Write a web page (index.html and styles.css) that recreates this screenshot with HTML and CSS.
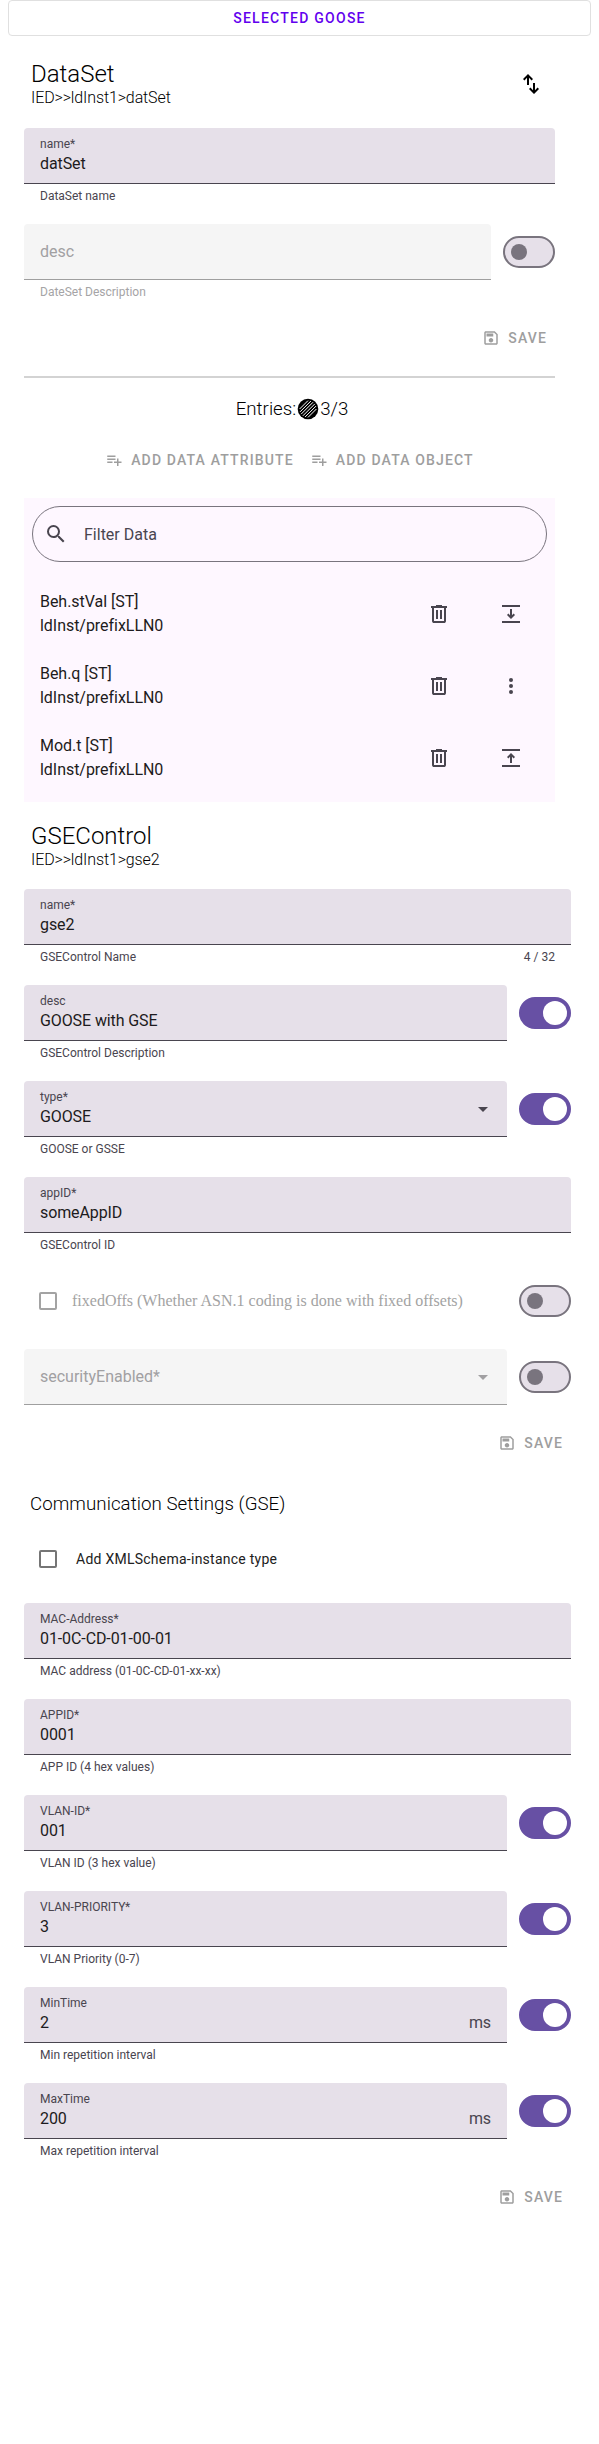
FILE: index.html
```html
<!DOCTYPE html>
<html lang="en">
<head>
<meta charset="utf-8">
<title>GOOSE editor</title>
<link rel="stylesheet" href="styles.css">
</head>
<body>
<svg class="defs" width="0" height="0" aria-hidden="true">
  <symbol id="save" viewBox="0 0 24 24"><path d="M17 3H5c-1.11 0-2 .9-2 2v14c0 1.1.89 2 2 2h14c1.1 0 2-.9 2-2V7l-4-4zm2 16H5V5h11.17L19 7.83V19zm-7-7c-1.66 0-3 1.34-3 3s1.34 3 3 3 3-1.34 3-3-1.34-3-3-3zM6 6h9v4H6z"/></symbol>
  <symbol id="playlist-add" viewBox="0 0 24 24"><path d="M14 10H3v2h11v-2zm0-4H3v2h11V6zm4 8v-4h-2v4h-4v2h4v4h2v-4h4v-2h-4zM3 16h7v-2H3v2z"/></symbol>
  <symbol id="delete" viewBox="0 -960 960 960"><path d="M280-120q-33 0-56.500-23.500T200-200v-520h-40v-80h200v-40h240v40h200v80h-40v520q0 33-23.500 56.500T680-120H280Zm400-600H280v520h400v-520ZM360-280h80v-360h-80v360Zm160 0h80v-360h-80v360Z"/></symbol>
  <symbol id="drop-down" viewBox="0 0 24 24"><path d="M7 10l5 5 5-5z"/></symbol>
</svg>

<button class="select-button">Selected GOOSE</button>

<main>
  <section class="dataset">
    <header class="heading">
      <div>
        <h2>DataSet</h2>
        <p>IED&gt;&gt;ldInst1&gt;datSet</p>
      </div>
      <span class="icon-button"><svg class="icon" viewBox="0 -960 960 960"><path d="M320-440v-287L217-624l-57-56 200-200 200 200-57 56-103-103v287h-80ZM600-80 400-280l57-56 103 103v-287h80v287l103-103 57 56L600-80Z"/></svg></span>
    </header>

    <div class="row">
      <div class="field">
        <div class="box"><span class="label">name*</span><span class="value">datSet</span></div>
        <div class="support"><span>DataSet name</span></div>
      </div>
    </div>
    <div class="row">
      <div class="field disabled">
        <div class="box"><span class="placeholder">desc</span></div>
        <div class="support"><span>DateSet Description</span></div>
      </div>
      <span class="switch"></span>
    </div>
    <div class="actions"><button class="text-button" disabled><svg><use href="#save"/></svg>Save</button></div>

    <hr>
    <h3 class="entries"><span>Entries:</span><svg class="icon" viewBox="0 0 24 24"><circle cx="12" cy="12" r="10.300"/><path class="hatch" d="M3.600 12L12 3.600M4 14.900L14.900 4M5.200 17.100L17.100 5.200M6.900 18.800L18.800 6.900M9.100 20L20 9.100M12 20.400L20.400 12"/></svg><span>3/3</span></h3>
    <div class="add-actions">
      <button class="text-button" disabled><svg><use href="#playlist-add"/></svg>Add data attribute</button>
      <button class="text-button" disabled><svg><use href="#playlist-add"/></svg>Add data object</button>
    </div>

    <div class="list">
      <div class="search">
        <svg class="icon" viewBox="0 0 24 24"><path d="M15.500 14h-.79l-.28-.27A6.471 6.471 0 0 0 16 9.500 6.500 6.500 0 1 0 9.500 16c1.610 0 3.090-.59 4.230-1.570l.27.28v.79l5 4.990L20.490 19l-4.990-5zm-6 0C7.010 14 5 11.990 5 9.500S7.010 5 9.500 5 14 7.010 14 9.500 11.990 14 9.500 14z"/></svg>
        <span>Filter Data</span>
      </div>
      <ul>
        <li>
          <div class="item-text">Beh.stVal [ST]<br>ldInst/prefixLLN0</div>
          <svg class="icon"><use href="#delete"/></svg>
          <svg class="icon" viewBox="0 0 24 24"><path d="M3 3h18v2H3zM3 19h18v2H3zM11 7h2v6.200l1.600-1.600L16 13l-4 4-4-4 1.400-1.400L11 13.200z"/></svg>
        </li>
        <li>
          <div class="item-text">Beh.q [ST]<br>ldInst/prefixLLN0</div>
          <svg class="icon"><use href="#delete"/></svg>
          <svg class="icon" viewBox="0 0 24 24"><circle cx="12" cy="6" r="2"/><circle cx="12" cy="12" r="2"/><circle cx="12" cy="18" r="2"/></svg>
        </li>
        <li>
          <div class="item-text">Mod.t [ST]<br>ldInst/prefixLLN0</div>
          <svg class="icon"><use href="#delete"/></svg>
          <svg class="icon" viewBox="0 0 24 24"><path d="M3 3h18v2H3zM3 19h18v2H3zM11 17h2v-6.200l1.600 1.600L16 11l-4-4-4 4 1.400 1.400L11 10.800z"/></svg>
        </li>
      </ul>
    </div>
  </section>

  <section class="control">
    <header class="heading">
      <div>
        <h2>GSEControl</h2>
        <p>IED&gt;&gt;ldInst1&gt;gse2</p>
      </div>
    </header>
    <div class="row">
      <div class="field">
        <div class="box"><span class="label">name*</span><span class="value">gse2</span></div>
        <div class="support"><span>GSEControl Name</span><span>4 / 32</span></div>
      </div>
    </div>
    <div class="row">
      <div class="field">
        <div class="box"><span class="label">desc</span><span class="value">GOOSE with GSE</span></div>
        <div class="support"><span>GSEControl Description</span></div>
      </div>
      <span class="switch on"></span>
    </div>
    <div class="row">
      <div class="field">
        <div class="box select"><div><span class="label">type*</span><span class="value">GOOSE</span></div><svg class="icon"><use href="#drop-down"/></svg></div>
        <div class="support"><span>GOOSE or GSSE</span></div>
      </div>
      <span class="switch on"></span>
    </div>
    <div class="row">
      <div class="field">
        <div class="box"><span class="label">appID*</span><span class="value">someAppID</span></div>
        <div class="support"><span>GSEControl ID</span></div>
      </div>
    </div>
    <div class="row check-row">
      <div class="check disabled"><span class="checkbox"></span><span class="serif">fixedOffs (Whether ASN.1 coding is done with fixed offsets)</span></div>
      <span class="switch"></span>
    </div>
    <div class="row">
      <div class="field disabled">
        <div class="box select"><span class="placeholder">securityEnabled*</span><svg class="icon"><use href="#drop-down"/></svg></div>
      </div>
      <span class="switch"></span>
    </div>
    <div class="actions"><button class="text-button" disabled><svg><use href="#save"/></svg>Save</button></div>
  </section>

  <section class="communication">
    <h3>Communication Settings (GSE)</h3>
    <div class="check"><span class="checkbox"></span><span class="check-label">Add XMLSchema-instance type</span></div>
    <div class="row">
      <div class="field">
        <div class="box"><span class="label">MAC-Address*</span><span class="value">01-0C-CD-01-00-01</span></div>
        <div class="support"><span>MAC address (01-0C-CD-01-xx-xx)</span></div>
      </div>
    </div>
    <div class="row">
      <div class="field">
        <div class="box"><span class="label">APPID*</span><span class="value">0001</span></div>
        <div class="support"><span>APP ID (4 hex values)</span></div>
      </div>
    </div>
    <div class="row">
      <div class="field">
        <div class="box"><span class="label">VLAN-ID*</span><span class="value">001</span></div>
        <div class="support"><span>VLAN ID (3 hex value)</span></div>
      </div>
      <span class="switch on"></span>
    </div>
    <div class="row">
      <div class="field">
        <div class="box"><span class="label">VLAN-PRIORITY*</span><span class="value">3</span></div>
        <div class="support"><span>VLAN Priority (0-7)</span></div>
      </div>
      <span class="switch on"></span>
    </div>
    <div class="row">
      <div class="field">
        <div class="box"><span class="label">MinTime</span><span class="value">2<span class="unit">ms</span></span></div>
        <div class="support"><span>Min repetition interval</span></div>
      </div>
      <span class="switch on"></span>
    </div>
    <div class="row">
      <div class="field">
        <div class="box"><span class="label">MaxTime</span><span class="value">200<span class="unit">ms</span></span></div>
        <div class="support"><span>Max repetition interval</span></div>
      </div>
      <span class="switch on"></span>
    </div>
    <div class="actions"><button class="text-button" disabled><svg><use href="#save"/></svg>Save</button></div>
  </section>
</main>
</body>
</html>
```
FILE: styles.css
```css
* { box-sizing: border-box; }

body {
  margin: 0;
  padding: 0 8px;
  min-height: 2444px;
  background: #fff;
  color: #000;
  font-family: Roboto, sans-serif;
}

.defs { display: none; }

h2, h3, p, ul { margin: 0; padding: 0; }

button {
  border: 0;
  background: none;
  font: 500 14px/36px Roboto, sans-serif;
  letter-spacing: 1.25px;
  text-transform: uppercase;
}

.select-button {
  display: block;
  width: 100%;
  height: 36px;
  padding: 0;
  border: 1px solid #e0e0e0;
  border-radius: 4px;
  color: #6200ee;
  line-height: 34px;
}

main { padding: 0 20px 0 16px; }

.icon { width: 24px; height: 24px; flex: none; fill: currentColor; }

/* Headings */
.heading {
  display: flex;
  justify-content: space-between;
  padding-left: 7px;
}
.heading h2 { font-size: 24px; font-weight: 300; line-height: 28px; }
.heading p { font-size: 16px; font-weight: 300; line-height: 19px; letter-spacing: -.12px; }
.dataset .heading { height: 92px; padding-top: 24px; }
.icon-button { display: flex; width: 48px; height: 48px; align-items: center; justify-content: center; }

/* Text fields */
.row { display: flex; gap: 12px; margin-bottom: 20px; }
.field { flex: 1; }
.box {
  display: flex;
  flex-direction: column;
  height: 56px;
  padding: 8px 16px 7px;
  border-bottom: 1px solid #49454f;
  border-radius: 4px 4px 0 0;
  background: #e6e0e9;
}
.label { display: block; color: #49454f; font-size: 12px; line-height: 16px; }
.value { display: flex; justify-content: space-between; color: #1d1b20; font-size: 16px; line-height: 24px; letter-spacing: -.1px; }
.unit { color: #49454f; }
.support {
  display: flex;
  justify-content: space-between;
  padding: 4px 16px 0;
  color: #49454f;
  font-size: 12px;
  line-height: 16px;
}
.placeholder { padding-top: 8px; font-size: 16px; line-height: 24px; }
.select { flex-direction: row; justify-content: space-between; padding-right: 12px; color: #49454f; }
.select .icon { margin-top: 8px; }
.field.disabled .box { background: #f5f5f5; border-color: #9f9f9f; color: #a1a0a2; }
.field.disabled .support { color: #a5a4a6; }

/* Switches */
.switch {
  display: flex;
  align-items: center;
  flex: none;
  width: 52px;
  height: 32px;
  margin-top: 12px;
  padding: 0 6px;
  border: 2px solid #79747e;
  border-radius: 16px;
  background: #e6e0e9;
}
.switch::before { content: ""; width: 16px; height: 16px; border-radius: 50%; background: #79747e; }
.switch.on { justify-content: flex-end; padding: 0 2px; border-color: #6750a4; background: #6750a4; }
.switch.on::before { width: 24px; height: 24px; background: #fff; }

/* Buttons */
.text-button { display: flex; align-items: center; gap: 8px; height: 36px; padding: 0 8px; color: #9e9e9e; letter-spacing: 1.15px; }
.text-button svg { width: 18px; height: 18px; fill: currentColor; }
.actions { display: flex; justify-content: flex-end; }

/* Data set */
.dataset { width: 531px; height: 766px; }
hr { height: 2px; margin: 20px 0 19px; border: 0; background: #d3d3d3; }
.entries { display: flex; align-items: center; justify-content: center; height: 24px; padding-left: 5px; font-size: 18.72px; font-weight: 300; }
.hatch { fill: none; stroke: #fff; stroke-width: 1; }
.add-actions { display: flex; justify-content: center; margin: 21px 0 20px; }
.list { padding: 8px 0; background: #fef7ff; }
.search {
  display: flex;
  align-items: center;
  gap: 16px;
  height: 56px;
  margin: 0 8px 16px;
  padding-left: 11px;
  border: 1px solid #79747e;
  border-radius: 28px;
  color: #49454f;
  font-size: 16px;
}
ul { list-style: none; }
li { display: flex; align-items: center; gap: 48px; height: 72px; padding: 0 32px 0 16px; color: #49454f; }
.item-text { flex: 1; color: #1d1b20; font-size: 16px; line-height: 24px; letter-spacing: -.04px; }

/* Control */
.control .heading { height: 87px; padding-top: 20px; }
.check { display: flex; align-items: center; flex: 1; padding-left: 15px; }
.checkbox { width: 18px; height: 18px; border: 2px solid #757575; border-radius: 2px; }
.check.disabled { color: #a3a3a3; }
.check.disabled .checkbox { border-color: #a3a3a3; }
.serif { margin-left: 15px; font: 16px "Liberation Serif", serif; }
.check-row { height: 56px; }

/* Communication */
.communication { padding-top: 31px; }
.communication h3 { padding-left: 6px; font-size: 18.72px; font-weight: 300; line-height: 24px; letter-spacing: .05px; }
.communication .check { height: 56px; margin: 15px 0 16px; }
.check-label { margin-left: 19px; color: #212121; font-size: 14px; letter-spacing: .25px; }
```
